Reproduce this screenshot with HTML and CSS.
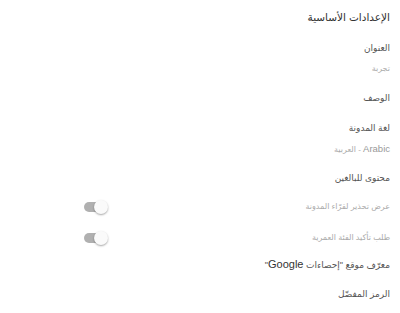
FILE: index.html
```html
<!DOCTYPE html>
<html lang="ar" dir="rtl">
<head>
    <meta charset="utf-8">
    <link rel="stylesheet" href="styles.css">
</head>
<body>
    <div class="settings">
        <div class="settings-title">الإعدادات الأساسية</div>

        <div class="section first">
            <div class="label">العنوان</div>
            <div class="value">تجربة</div>
        </div>

        <div class="section">
            <div class="label">الوصف</div>
        </div>

        <div class="section">
            <div class="label">لغة المدونة</div>
            <div class="value"><span class="latin">Arabic</span> - العربية</div>
        </div>

        <div class="section">
            <div class="label">محتوى للبالغين</div>
            <div class="toggle-row">
                <span class="value">عرض تحذير لقرّاء المدونة</span>
                <span class="toggle"><span class="knob"></span></span>
            </div>
            <div class="toggle-row">
                <span class="value">طلب تأكيد الفئة العمرية</span>
                <span class="toggle"><span class="knob"></span></span>
            </div>
        </div>

        <div class="section tight">
            <div class="label">معرّف موقع "إحصاءات <span class="latin">Google</span>"</div>
        </div>

        <div class="section">
            <div class="label">الرمز المفضّل</div>
        </div>
    </div>
</body>
</html>
```

FILE: styles.css
```css
body {
    margin: 0;
    background-color: #FFFFFF;
    font-family: "Liberation Sans", "DejaVu Sans", Arial, sans-serif;
}

.settings {
    padding: 0 10px 0 84px;
}

.settings-title {
    height: 34px;
    line-height: 34px;
    font-size: 10.5px;
    color: #333;
}

.section {
    margin-top: 10px;
}

.section.first {
    margin-top: 4px;
}

.section.tight {
    margin-top: 4px;
}

.label {
    height: 20px;
    line-height: 20px;
    font-size: 9px;
    color: #555;
}

.label .latin {
    font-size: 11px;
    color: #333;
}

.value {
    height: 18px;
    line-height: 18px;
    padding-top: 2px;
    font-size: 8px;
    color: #aaa;
}

.value .latin {
    font-size: 9.5px;
    color: #999;
}

.toggle-row {
    display: flex;
    justify-content: space-between;
    align-items: center;
    height: 24px;
    margin-top: 7px;
}

.toggle-row .value {
    padding-top: 0;
}

.toggle-row + .toggle-row {
    margin-top: 7px;
}

.toggle {
    position: relative;
    width: 24px;
    height: 14px;
    direction: ltr;
}

.toggle::before {
    content: "";
    position: absolute;
    left: 0;
    top: 2px;
    width: 20px;
    height: 10px;
    border-radius: 5px;
    background-color: #b0b0b0;
}

.knob {
    position: absolute;
    right: 0;
    top: 0;
    width: 14px;
    height: 14px;
    border-radius: 50%;
    background-color: #fafafa;
    box-shadow: 0 1px 2px rgba(0, 0, 0, 0.35);
}
```
